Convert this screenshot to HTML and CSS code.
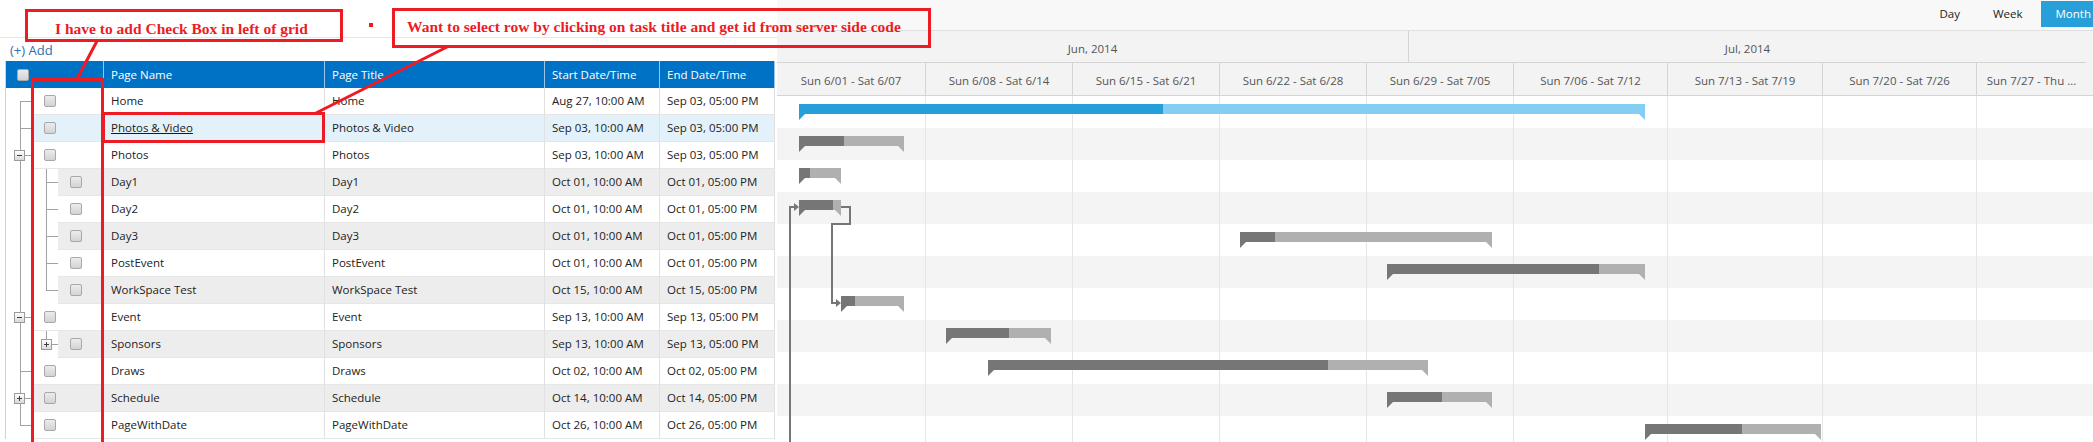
FILE: index.html
```html
<!DOCTYPE html>
<html>
<head>
<meta charset="utf-8">
<title>Gantt</title>
<link rel="stylesheet" href="styles.css">
</head>
<body>
<div class="page">
  <section class="left">
    <div class="left-top"></div>
    <div class="add">(+) Add</div>
    <div class="grid">
      <div class="row head">
        <div class="c c1"><span class="cb"></span></div>
        <div class="c">Page Name</div>
        <div class="c">Page Title</div>
        <div class="c">Start Date/Time</div>
        <div class="c">End Date/Time</div>
      </div>
      <div class="row">
        <div class="c c1"><span class="tree l0 first"></span><span class="chk"><span class="cb"></span></span></div>
        <div class="c">Home</div><div class="c">Home</div><div class="c">Aug 27, 10:00 AM</div><div class="c">Sep 03, 05:00 PM</div>
      </div>
      <div class="row sel">
        <div class="c c1"><span class="tree l0 mid"></span><span class="chk"><span class="cb"></span></span></div>
        <div class="c"><span class="link">Photos &amp; Video</span></div><div class="c">Photos &amp; Video</div><div class="c">Sep 03, 10:00 AM</div><div class="c">Sep 03, 05:00 PM</div>
      </div>
      <div class="row">
        <div class="c c1"><span class="tree l0 mid"><span class="exp minus"></span></span><span class="chk"><span class="cb"></span></span></div>
        <div class="c">Photos</div><div class="c">Photos</div><div class="c">Sep 03, 10:00 AM</div><div class="c">Sep 03, 05:00 PM</div>
      </div>
      <div class="row alt">
        <div class="c c1"><span class="tree l1"></span><span class="chk k1"><span class="cb"></span></span></div>
        <div class="c">Day1</div><div class="c">Day1</div><div class="c">Oct 01, 10:00 AM</div><div class="c">Oct 01, 05:00 PM</div>
      </div>
      <div class="row">
        <div class="c c1"><span class="tree l1"></span><span class="chk k1"><span class="cb"></span></span></div>
        <div class="c">Day2</div><div class="c">Day2</div><div class="c">Oct 01, 10:00 AM</div><div class="c">Oct 01, 05:00 PM</div>
      </div>
      <div class="row alt">
        <div class="c c1"><span class="tree l1"></span><span class="chk k1"><span class="cb"></span></span></div>
        <div class="c">Day3</div><div class="c">Day3</div><div class="c">Oct 01, 10:00 AM</div><div class="c">Oct 01, 05:00 PM</div>
      </div>
      <div class="row">
        <div class="c c1"><span class="tree l1"></span><span class="chk k1"><span class="cb"></span></span></div>
        <div class="c">PostEvent</div><div class="c">PostEvent</div><div class="c">Oct 01, 10:00 AM</div><div class="c">Oct 01, 05:00 PM</div>
      </div>
      <div class="row alt">
        <div class="c c1"><span class="tree l1 last"></span><span class="chk k1"><span class="cb"></span></span></div>
        <div class="c">WorkSpace Test</div><div class="c">WorkSpace Test</div><div class="c">Oct 15, 10:00 AM</div><div class="c">Oct 15, 05:00 PM</div>
      </div>
      <div class="row">
        <div class="c c1"><span class="tree l0 mid"><span class="exp minus"></span></span><span class="chk"><span class="cb"></span></span></div>
        <div class="c">Event</div><div class="c">Event</div><div class="c">Sep 13, 10:00 AM</div><div class="c">Sep 13, 05:00 PM</div>
      </div>
      <div class="row alt">
        <div class="c c1"><span class="tree l1 last"><span class="exp plus e1"></span></span><span class="chk k1"><span class="cb"></span></span></div>
        <div class="c">Sponsors</div><div class="c">Sponsors</div><div class="c">Sep 13, 10:00 AM</div><div class="c">Sep 13, 05:00 PM</div>
      </div>
      <div class="row">
        <div class="c c1"><span class="tree l0 mid"></span><span class="chk"><span class="cb"></span></span></div>
        <div class="c">Draws</div><div class="c">Draws</div><div class="c">Oct 02, 10:00 AM</div><div class="c">Oct 02, 05:00 PM</div>
      </div>
      <div class="row alt">
        <div class="c c1"><span class="tree l0 mid"><span class="exp plus"></span></span><span class="chk"><span class="cb"></span></span></div>
        <div class="c">Schedule</div><div class="c">Schedule</div><div class="c">Oct 14, 10:00 AM</div><div class="c">Oct 14, 05:00 PM</div>
      </div>
      <div class="row">
        <div class="c c1"><span class="tree l0 last"></span><span class="chk"><span class="cb"></span></span></div>
        <div class="c">PageWithDate</div><div class="c">PageWithDate</div><div class="c">Oct 26, 10:00 AM</div><div class="c">Oct 26, 05:00 PM</div>
      </div>
    </div>
  </section>

  <section class="right">
    <div class="toolbar">
      <div class="views">
        <span class="vb">Day</span>
        <span class="vb">Week</span>
        <span class="vb on">Month</span>
      </div>
    </div>
    <div class="months">
      <div class="mo jun">Jun, 2014</div>
      <div class="mo jul">Jul, 2014</div>
    </div>
    <div class="weeks">
      <div class="wk">Sun 6/01 - Sat 6/07</div>
      <div class="wk">Sun 6/08 - Sat 6/14</div>
      <div class="wk">Sun 6/15 - Sat 6/21</div>
      <div class="wk">Sun 6/22 - Sat 6/28</div>
      <div class="wk">Sun 6/29 - Sat 7/05</div>
      <div class="wk">Sun 7/06 - Sat 7/12</div>
      <div class="wk">Sun 7/13 - Sat 7/19</div>
      <div class="wk">Sun 7/20 - Sat 7/26</div>
      <div class="wk last">Sun 7/27 - Thu ...</div>
    </div>
    <div class="gbody">
      <div class="stripes">
        <div class="gr"></div><div class="gr"></div><div class="gr"></div><div class="gr"></div>
        <div class="gr"></div><div class="gr"></div><div class="gr"></div><div class="gr"></div>
        <div class="gr"></div><div class="gr"></div><div class="gr"></div>
      </div>
      <div class="cols">
        <div class="col"></div><div class="col"></div><div class="col"></div>
        <div class="col"></div><div class="col"></div><div class="col"></div>
        <div class="col"></div><div class="col"></div><div class="col last"></div>
      </div>
      <svg class="deps" width="1316" height="346" viewBox="0 0 1316 346">
        <polyline points="64,111 73,111 73,128 55,128 55,207 59,207" fill="none" stroke="#767676" stroke-width="2"/>
        <polygon points="59,203 64,207 59,211" fill="#767676"/>
        <polyline points="13,360 13,111 17,111" fill="none" stroke="#767676" stroke-width="2"/>
        <polygon points="17,107 22,111 17,115" fill="#767676"/>
      </svg>
      <div class="bar sum" style="left:22px;top:8px;width:846px"><div class="prog" style="width:364px"></div></div>
      <div class="bar" style="left:22px;top:40px;width:105px"><div class="prog" style="width:45px"></div></div>
      <div class="bar" style="left:22px;top:72px;width:42px"><div class="prog" style="width:11px"></div></div>
      <div class="bar" style="left:22px;top:104px;width:42px"><div class="prog" style="width:34px"></div></div>
      <div class="bar" style="left:463px;top:136px;width:252px"><div class="prog" style="width:35px"></div></div>
      <div class="bar" style="left:610px;top:168px;width:258px"><div class="prog" style="width:212px"></div></div>
      <div class="bar" style="left:64px;top:200px;width:63px"><div class="prog" style="width:14px"></div></div>
      <div class="bar" style="left:169px;top:232px;width:105px"><div class="prog" style="width:63px"></div></div>
      <div class="bar" style="left:211px;top:264px;width:440px"><div class="prog" style="width:340px"></div></div>
      <div class="bar" style="left:610px;top:296px;width:105px"><div class="prog" style="width:55px"></div></div>
      <div class="bar" style="left:868px;top:328px;width:176px"><div class="prog" style="width:97px"></div></div>
    </div>
  </section>

  <div class="note n1">I have to add Check Box in left of grid</div>
  <div class="dot"></div>
  <div class="note n2">Want to select row by clicking on task title and get id from server side code</div>
  <div class="hl hl-col"></div>
  <div class="hl hl-cell"></div>
  <svg class="arrows" width="2093" height="442" viewBox="0 0 2093 442">
    <line x1="97" y1="41" x2="77" y2="79" stroke="#ed1c24" stroke-width="3"/>
    <line x1="316" y1="113" x2="447" y2="47" stroke="#ed1c24" stroke-width="3"/>
  </svg>
</div>
</body>
</html>
```
FILE: styles.css
```css
* { box-sizing: border-box; }
html, body { margin: 0; padding: 0; background: #fff; }
body { font-family: "Open Sans", "Noto Sans", sans-serif; font-size: 11.5px; color: #222; }

.page { position: relative; display: flex; width: 2093px; height: 442px; overflow: hidden; }

/* ---------- left grid ---------- */
.left { width: 777px; flex: none; }
.left-top { height: 38px; border-bottom: 1px solid #e6e6e6; }
.add { height: 23px; padding: 3px 0 0 10px; font-size: 13px; color: #2f6db3; line-height: normal; }

.grid { margin-left: 5px; width: 770px; border-left: 1px solid #d2d2d2; }
.row { display: grid; grid-template-columns: 98px 221px 220px 115px 115px; height: 27px; }
.c {
  border-right: 1px solid #e1e1e1;
  border-bottom: 1px solid #e6e6e6;
  padding-left: 7px;
  line-height: 26px;
  white-space: nowrap;
  overflow: hidden;
}
.row.head .c { background: #0072c6; color: #fff; border-bottom: none; border-right-color: #9cc4e6; line-height: 27px; }
.row.head .c1 { padding-left: 11px; display: flex; align-items: center; }

.c1 { padding: 0; display: flex; border-bottom: none; }
.tree { width: 27px; height: 27px; flex: none; display: flex; align-items: center; background-color: #fff; background-repeat: no-repeat; }
.chk { flex: 1; height: 27px; display: flex; align-items: center; padding-left: 11px; border-bottom: 1px solid #e6e6e6; }
.chk.k1 { padding-left: 12px; }

.row.alt .c:not(.c1), .row.alt .chk { background: #ededed; }
.row.sel .c:not(.c1), .row.sel .chk { background: #e3f1fa; }

.link { text-decoration: underline; color: #1a1a1a; }

/* tree connector lines */
.tree.l0.first {
  background-image: linear-gradient(#a2a2a2, #a2a2a2), linear-gradient(#a2a2a2, #a2a2a2);
  background-position: 14px 13px, 14px 13px;
  background-size: 1px 14px, 13px 1px;
}
.tree.l0.mid {
  background-image: linear-gradient(#a2a2a2, #a2a2a2), linear-gradient(#a2a2a2, #a2a2a2);
  background-position: 14px 0, 14px 13px;
  background-size: 1px 27px, 13px 1px;
}
.tree.l0.last {
  background-image: linear-gradient(#a2a2a2, #a2a2a2), linear-gradient(#a2a2a2, #a2a2a2);
  background-position: 14px 0, 14px 13px;
  background-size: 1px 14px, 13px 1px;
}
.tree.l1 {
  width: 52px;
  background-image: linear-gradient(#a2a2a2, #a2a2a2), linear-gradient(#a2a2a2, #a2a2a2), linear-gradient(#a2a2a2, #a2a2a2);
  background-position: 14px 0, 40px 0, 40px 13px;
  background-size: 1px 27px, 1px 27px, 12px 1px;
}
.tree.l1.last { background-size: 1px 27px, 1px 14px, 12px 1px; }

.exp {
  width: 11px; height: 11px; margin-left: 8px; flex: none;
  border: 1px solid #9b9b9b;
  background-repeat: no-repeat;
}
.exp.minus {
  background-image: linear-gradient(#404040, #404040), linear-gradient(#ffffff, #d9d9d9);
  background-position: center, 0 0;
  background-size: 5px 1px, 100% 100%;
}
.exp.plus {
  background-image: linear-gradient(#404040, #404040), linear-gradient(#404040, #404040), linear-gradient(#ffffff, #d9d9d9);
  background-position: center, center, 0 0;
  background-size: 5px 1px, 1px 5px, 100% 100%;
}
.exp.e1 { margin-left: 35px; }

.cb {
  display: block; width: 12px; height: 12px; flex: none;
  border: 1px solid #a8a8a8; border-radius: 2px;
  background: linear-gradient(#ececec, #d3d3d3);
}

/* ---------- right gantt ---------- */
.right { flex: 1; overflow: hidden; background: #fff; }
.toolbar { height: 31px; background: #f8f8f8; border-bottom: 1px solid #e0e0e0; display: flex; justify-content: flex-end; padding-top: 1px; }
.views { display: flex; gap: 3px; margin-right: -13px; }
.vb { height: 26px; padding: 0 15px; line-height: 26px; color: #222; }
.vb.on { background: #27a0da; color: #fff; }

.months { display: flex; height: 32px; background: #f3f3f3; }
.mo { height: 32px; padding-top: 10px; text-align: center; color: #555; border-bottom: 1px solid #d4d4d4; line-height: 16px; }
.mo.jun { width: 632px; border-right: 1px solid #d4d4d4; }
.mo.jul { width: 677px; }

.weeks, .cols { display: grid; grid-template-columns: 149px 147px 147px 147px 147px 154px 155px 154px 109px; }
.weeks { height: 33px; background: #f3f3f3; border-bottom: 1px solid #d4d4d4; }
.wk { border-right: 1px solid #d4d4d4; text-align: center; padding-top: 10px; line-height: 16px; color: #555; white-space: nowrap; overflow: hidden; }
.wk.last { border-right: none; }

.gbody { position: relative; height: 346px; overflow: hidden; }
.gr { height: 32px; }
.gr:nth-child(even) { background: #f4f4f4; }
.cols { position: absolute; top: 0; left: 0; height: 100%; }
.col { border-right: 1px solid #e6e6e6; }
.col.last { border-right: none; }
.deps { position: absolute; top: 0; left: 0; overflow: visible; }

.bar { position: absolute; height: 10px; background: #b0b0b0; }
.prog { height: 10px; background: #767676; }
.bar::before, .bar::after { content: ""; position: absolute; top: 10px; width: 6px; height: 6px; }
.bar::before { left: 0; background: #767676; clip-path: polygon(0 0, 100% 0, 0 100%); }
.bar::after { right: 0; background: #b0b0b0; clip-path: polygon(0 0, 100% 0, 100% 100%); }
.bar.sum { background: #84cef3; }
.bar.sum .prog { background: #269fd9; }
.bar.sum::before { background: #269fd9; }
.bar.sum::after { background: #84cef3; }

/* ---------- red annotations ---------- */
.note {
  position: absolute;
  border: 3px solid #ed1c24;
  color: #ed1c24;
  font-family: "Liberation Serif", "Times New Roman", serif;
  font-weight: bold;
  font-size: 15.5px;
  line-height: normal;
  white-space: nowrap;
}
.n1 { left: 25px; top: 9px; width: 318px; height: 33px; padding: 8px 0 0 27px; }
.n2 { left: 392px; top: 8px; width: 539px; height: 40px; padding: 7px 0 0 12px; }
.dot { position: absolute; left: 369px; top: 23px; width: 4px; height: 4px; background: #ed1c24; }
.hl { position: absolute; border: 3px solid #ed1c24; }
.hl-col { left: 31px; top: 78px; width: 73px; height: 400px; }
.hl-cell { left: 102px; top: 112px; width: 223px; height: 31px; }
.arrows { position: absolute; top: 0; left: 0; pointer-events: none; }
```
